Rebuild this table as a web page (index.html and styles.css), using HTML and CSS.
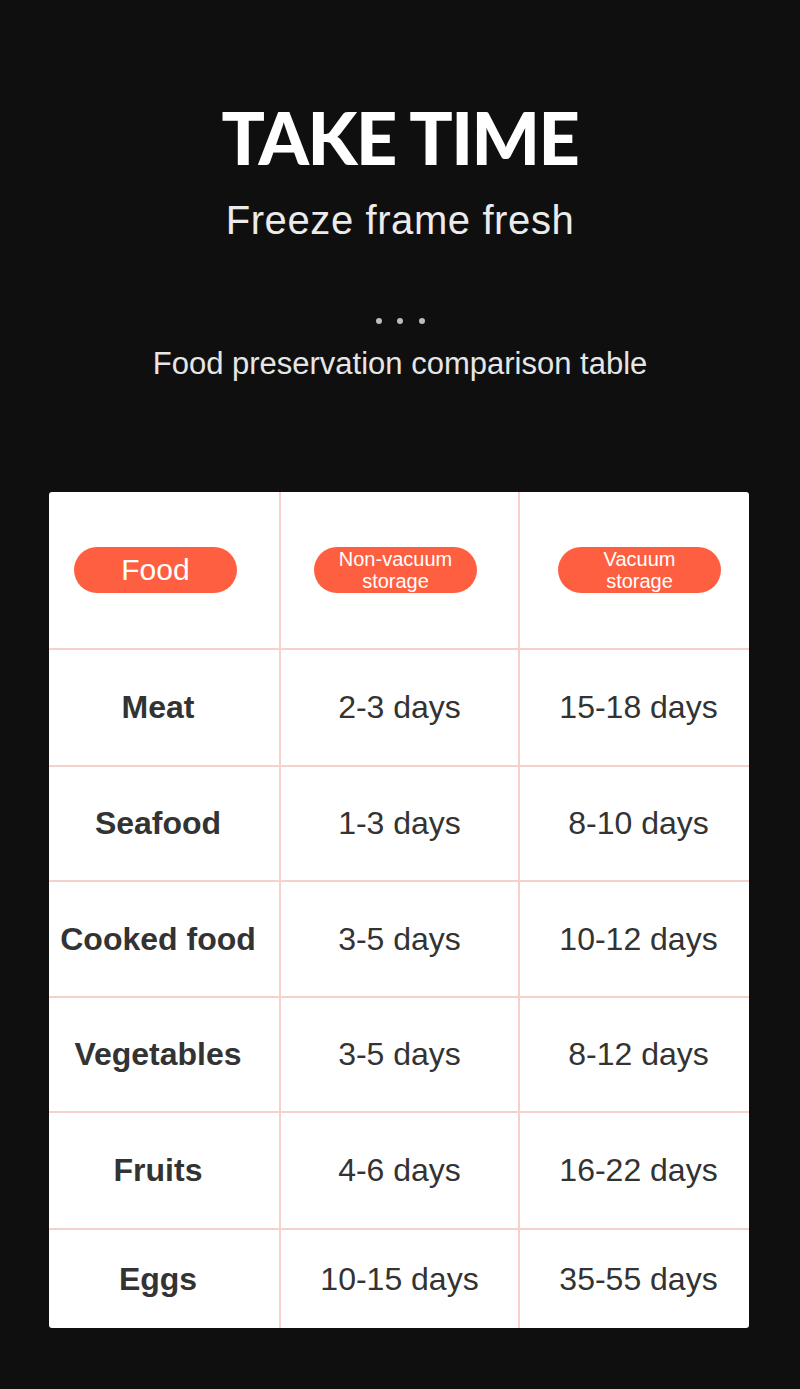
FILE: index.html
```html
<!DOCTYPE html>
<html lang="en">
<head>
<meta charset="utf-8">
<title>Take Time</title>
<link rel="stylesheet" href="styles.css">
</head>
<body>
<main class="page">
  <header class="intro">
    <h1 class="title">TAKE TIME</h1>
    <p class="subtitle">Freeze frame fresh</p>
    <div class="dots"><span></span><span></span><span></span></div>
    <p class="caption">Food preservation comparison table</p>
  </header>
  <section class="card">
    <div class="cell head head-1"><span class="pill pill-big">Food</span></div>
    <div class="cell head head-2"><span class="pill">Non-vacuum<br>storage</span></div>
    <div class="cell head head-3 last"><span class="pill">Vacuum<br>storage</span></div>

    <div class="cell name">Meat</div>
    <div class="cell">2-3 days</div>
    <div class="cell last">15-18 days</div>

    <div class="cell name">Seafood</div>
    <div class="cell">1-3 days</div>
    <div class="cell last">8-10 days</div>

    <div class="cell name">Cooked food</div>
    <div class="cell">3-5 days</div>
    <div class="cell last">10-12 days</div>

    <div class="cell name">Vegetables</div>
    <div class="cell">3-5 days</div>
    <div class="cell last">8-12 days</div>

    <div class="cell name">Fruits</div>
    <div class="cell">4-6 days</div>
    <div class="cell last">16-22 days</div>

    <div class="cell name bottom">Eggs</div>
    <div class="cell bottom">10-15 days</div>
    <div class="cell last bottom">35-55 days</div>
  </section>
</main>
</body>
</html>
```

FILE: styles.css
```css
* { box-sizing: border-box; }
html, body {
  margin: 0;
  padding: 0;
  background: #0f0f0f;
}
.page {
  width: 800px;
  height: 1389px;
  padding-top: 101px;
  font-family: "Liberation Sans", Arial, sans-serif;
}
.intro {
  display: flex;
  flex-direction: column;
  align-items: center;
}
.title {
  margin: 0;
  font-family: Lato, "Liberation Sans", sans-serif;
  font-weight: 900;
  font-size: 72px;
  line-height: 72px;
  color: #ffffff;
  letter-spacing: -1.5px;
}
.subtitle {
  margin: 27px 0 0;
  font-size: 40px;
  line-height: 40px;
  letter-spacing: 0.6px;
  color: #ebebeb;
}
.dots {
  margin-top: 78px;
  display: flex;
  gap: 15.5px;
  height: 6px;
}
.dots span {
  width: 6px;
  height: 6px;
  border-radius: 50%;
  background: #bdbdbd;
}
.caption {
  margin: 24px 0 0;
  font-size: 31px;
  line-height: 31px;
  color: #e6e6e6;
}
.card {
  margin: 113px 0 0 49px;
  width: 700px;
  background: #ffffff;
  border-radius: 3px;
  display: grid;
  grid-template-columns: 232px 239px 229px;
  grid-template-rows: 158px 117px 115px 116px 115px 117px 98px;
}
.cell {
  display: flex;
  align-items: center;
  justify-content: center;
  border-right: 2px solid #f4d2ca;
  border-bottom: 2px solid #f4d2ca;
  font-size: 32px;
  color: #333333;
  white-space: nowrap;
}
.cell.last { border-right: none; padding-left: 8px; }
.cell.bottom { border-bottom: none; }
.cell.name { font-weight: 700; padding-right: 12px; }
.head {
  justify-content: flex-start;
}
.head-1 { padding-left: 25px; }
.head-2 { padding-left: 33px; }
.cell.head-3 { padding-left: 38px; }
.pill {
  width: 163px;
  height: 46px;
  border-radius: 23px;
  background: #fe5f40;
  color: #ffffff;
  display: flex;
  align-items: center;
  justify-content: center;
  text-align: center;
  font-size: 20px;
  line-height: 22px;
}
.pill-big {
  font-size: 30px;
  line-height: 30px;
}
```
